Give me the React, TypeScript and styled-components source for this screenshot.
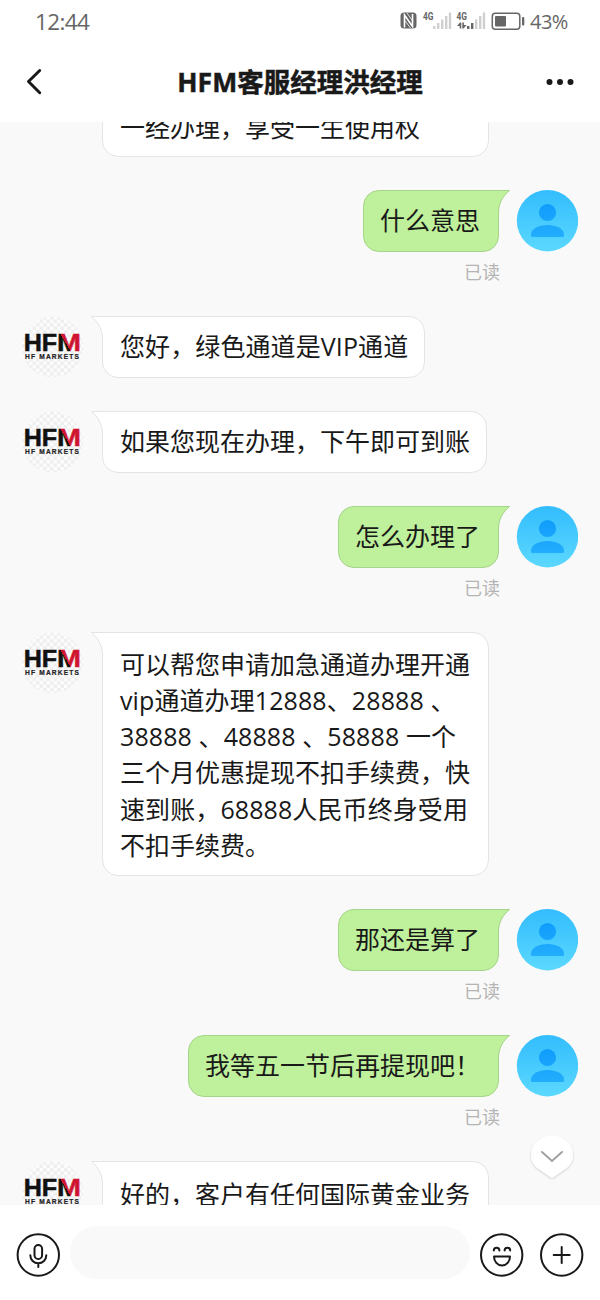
import React from 'react';
import styled, { createGlobalStyle } from 'styled-components';

const GlobalStyle = createGlobalStyle`
  * { box-sizing: border-box; }
  body {
    margin: 0;
    background: #fff;
    font-family: 'Open Sans', 'Noto Sans CJK SC', sans-serif;
    color: #191919;
  }
`;

const Screen = styled.div`
  width: 600px;
  height: 1300px;
  display: flex;
  flex-direction: column;
  overflow: hidden;
  background: #fff;
`;

const StatusBar = styled.div`
  height: 44px;
  flex: none;
  display: flex;
  align-items: center;
  justify-content: space-between;
  padding: 0 31px 0 35px;
  color: #666;
  font-size: 22.5px;
  line-height: 44px;
`;

const Clock = styled.span`
  letter-spacing: -0.6px;
`;

const StatusIcons = styled.div`
  display: flex;
  align-items: center;
`;

const BatteryText = styled.span`
  width: 39px;
  margin-left: 5px;
  font-size: 20px;
  letter-spacing: -0.5px;
  white-space: nowrap;
`;

const NavBar = styled.header`
  height: 78px;
  flex: none;
  display: grid;
  grid-template-columns: 80px 1fr 80px;
  align-items: center;
`;

const Title = styled.h1`
  margin: 0 0 2px;
  text-align: center;
  font-size: 26.5px;
  font-weight: 700;
  line-height: 40px;
  white-space: nowrap;
  -webkit-text-stroke: 0.5px #191919;
`;

const NavButton = styled.button<{ $align: 'start' | 'end' }>`
  border: 0;
  background: none;
  height: 78px;
  padding: 0 25px 2px;
  display: flex;
  align-items: center;
  justify-content: flex-${(p) => p.$align};
`;

const Chat = styled.main`
  height: 1083px;
  flex: none;
  overflow: hidden;
  background: #f9f9f9;
  position: relative;
`;

const MessageList = styled.div`
  display: flex;
  flex-direction: column;
  gap: 33px;
  margin-top: -27px;
  padding: 0 22px;
`;

const Row = styled.div<{ $sent?: boolean }>`
  display: flex;
  align-items: flex-start;
  flex-direction: ${(p) => (p.$sent ? 'row-reverse' : 'row')};
  gap: ${(p) => (p.$sent ? 17 : 18)}px;
`;

const AvatarSlot = styled.div`
  width: 62px;
  height: 62px;
  flex: none;
`;

const Stack = styled.div`
  display: flex;
  flex-direction: column;
  align-items: flex-end;
`;

const Bubble = styled.div<{ $sent?: boolean; $width: number; $height: number; $top: number }>`
  position: relative;
  width: ${(p) => p.$width}px;
  height: ${(p) => p.$height}px;
  padding-top: ${(p) => p.$top}px;
  padding-left: ${(p) => (p.$sent ? 16 : 17)}px;
  border: 1px solid ${(p) => (p.$sent ? '#a5d58a' : '#e4e4e4')};
  border-radius: ${(p) => (p.$sent ? '16px 0 16px 16px' : '0 16px 16px 16px')};
  background: ${(p) => (p.$sent ? '#bff09b' : '#fff')};
  font-size: 25px;
  line-height: 36.15px;
`;

const Line = styled.div<{ $spacing: number }>`
  height: 36.15px;
  white-space: pre;
  letter-spacing: ${(p) => p.$spacing}px;
`;

const Tail = styled.svg<{ $sent?: boolean }>`
  position: absolute;
  top: -1px;
  ${(p) => (p.$sent ? 'right: -12px;' : 'left: -12px;')}
  transform: ${(p) => (p.$sent ? 'scaleX(-1)' : 'none')};
`;

const ReadMark = styled.div`
  height: 31px;
  padding-top: 7px;
  font-size: 18px;
  line-height: 26px;
  color: #b4b4b4;
  margin-right: -1px;
`;

const ScrollDown = styled.button`
  position: absolute;
  left: 526px;
  top: 1009px;
  padding: 0;
  border: 0;
  background: none;
  line-height: 0;
`;

const InputBar = styled.footer`
  flex: 1;
  display: flex;
  align-items: flex-start;
  padding: 21px 16px 0;
`;

const RoundButton = styled.button`
  width: 44px;
  height: 44px;
  margin-top: 7px;
  padding: 0;
  border: 0;
  background: none;
  line-height: 0;
`;

const InputField = styled.div`
  width: 400px;
  height: 53px;
  margin: 0 10px 0 10px;
  border-radius: 27px;
  background: #f9f9f9;
`;

const ButtonPair = styled.div`
  display: flex;
  gap: 16px;
`;

const BrandAvatar = () => (
  <svg width="62" height="62" viewBox="0 0 62 62">
    <defs>
      <pattern id="checks" width="7" height="7" patternUnits="userSpaceOnUse">
        <rect width="7" height="7" fill="#fcfcfc" />
        <rect width="3.500" height="3.500" fill="#efefef" />
        <rect x="3.500" y="3.500" width="3.500" height="3.500" fill="#efefef" />
      </pattern>
      <linearGradient id="brandM" gradientUnits="userSpaceOnUse" x1="38" y1="31" x2="50" y2="24">
        <stop offset="0.5" stopColor="#111" />
        <stop offset="0.5" stopColor="#cf1430" />
      </linearGradient>
    </defs>
    <circle cx="30.500" cy="31" r="30.500" fill="url(#checks)" />
    <g fontFamily="Liberation Sans, sans-serif" fontWeight="700">
      <text x="1.700" y="34.700" fontSize="24.500" textLength="33.500" lengthAdjust="spacingAndGlyphs" fill="#111" stroke="#111" strokeWidth="0.500">HF</text>
      <text x="35" y="34.700" fontSize="24.500" textLength="24" lengthAdjust="spacingAndGlyphs" fill="url(#brandM)" stroke="url(#brandM)" strokeWidth="0.500">M</text>
      <text x="3" y="43.300" fontSize="6.600" textLength="54" fill="#222" stroke="#222" strokeWidth="0.200">HF MARKETS</text>
    </g>
  </svg>
);

const UserAvatar = () => (
  <svg width="62" height="62" viewBox="0 0 62 62">
    <defs>
      <linearGradient id="userBg" x1="0" y1="0" x2="0" y2="1">
        <stop offset="0" stopColor="#33bdfd" />
        <stop offset="1" stopColor="#5bd8fe" />
      </linearGradient>
      <linearGradient id="userFg" gradientUnits="userSpaceOnUse" x1="0" y1="14" x2="0" y2="47">
        <stop offset="0" stopColor="#109cfc" />
        <stop offset="1" stopColor="#22adfd" />
      </linearGradient>
    </defs>
    <circle cx="31.500" cy="30.700" r="30.700" fill="url(#userBg)" />
    <circle cx="31.500" cy="22.500" r="8.600" fill="url(#userFg)" />
    <path d="M15 44.500c0-6 8-9.600 16.500-9.600s16.500 3.600 16.500 9.600v1q0 1.500-1.500 1.500h-30q-1.500 0-1.500-1.500z" fill="url(#userFg)" />
  </svg>
);

const BubbleTail = ({ sent }: { sent?: boolean }) => (
  <Tail $sent={sent} width="20" height="26" viewBox="0 0 20 26">
    <path d="M.5 .5C7 6 11.500 13 11.500 23V26H20V.5z" fill={sent ? '#bff09b' : '#fff'} />
    <path d="M20 .5H.5C7 6 11.500 13 11.500 23V26" fill="none" stroke={sent ? '#a5d58a' : '#e4e4e4'} />
  </Tail>
);

type Message = {
  lines: string[];
  width: number;
  height?: number;
  top?: number;
  sent?: boolean;
  noAvatar?: boolean;
};

const messages: Message[] = [
  { lines: ['一经办理，享受一生使用权'], width: 387, top: 13, noAvatar: true },
  { lines: ['什么意思'], width: 136, sent: true },
  { lines: ['您好，绿色通道是VIP通道'], width: 323 },
  { lines: ['如果您现在办理，下午即可到账'], width: 385 },
  { lines: ['怎么办理了'], width: 161, sent: true },
  {
    lines: [
      '可以帮您申请加急通道办理开通',
      'vip通道办理12888、28888 、',
      '38888 、48888 、58888 一个',
      '三个月优惠提现不扣手续费，快',
      '速到账，68888人民币终身受用',
      '不扣手续费。',
    ],
    width: 387,
    height: 244,
    top: 13,
  },
  { lines: ['那还是算了'], width: 161, sent: true },
  { lines: ['我等五一节后再提现吧！'], width: 311, sent: true },
  { lines: ['好的，客户有任何国际黄金业务'], width: 387, height: 98, top: 14 },
];

// Lines that mix Latin text or digits with Chinese are set slightly wider.
const spacingFor = (line: string) => (/[0-9A-Za-z]/.test(line) ? 0.1 : 0);

const MessageRow = ({ message: m }: { message: Message }) => (
  <Row $sent={m.sent}>
    <AvatarSlot>{!m.noAvatar && (m.sent ? <UserAvatar /> : <BrandAvatar />)}</AvatarSlot>
    <Stack>
      <Bubble $sent={m.sent} $width={m.width} $height={m.height ?? 62} $top={m.top ?? 11}>
        <BubbleTail sent={m.sent} />
        {m.lines.map((line) => (
          <Line key={line} $spacing={spacingFor(line)}>{line}</Line>
        ))}
      </Bubble>
      {m.sent && <ReadMark>已读</ReadMark>}
    </Stack>
  </Row>
);

const StatusGlyphs = () => (
  <svg width="125" height="24" viewBox="400 10 125 24">
    <rect x="400.500" y="12.500" width="16" height="16" rx="3.500" fill="#666" />
    <path d="M404.500 27.500V15l8 11.500V14" fill="none" stroke="#fff" strokeWidth="1.600" />
    <path d="M407 13l6 8.500M404 19.500l6.500 8.500" stroke="#fff" strokeWidth="0.800" />
    <g fontFamily="Roboto, sans-serif" fontSize="10.500" fontWeight="700" fill="#666">
      <text x="423" y="19.500" textLength="10.500" lengthAdjust="spacingAndGlyphs">4G</text>
      <text x="456.500" y="19.500" textLength="10.500" lengthAdjust="spacingAndGlyphs">4G</text>
    </g>
    <g fill="#cfcfcf">
      <rect x="433" y="26" width="2.400" height="3" />
      <rect x="437" y="23" width="2.400" height="6" />
      <rect x="441" y="19.500" width="2.400" height="9.500" />
      <rect x="445" y="16" width="2.400" height="13" />
      <rect x="448.800" y="12.500" width="2.400" height="16.500" />
      <rect x="475" y="19.500" width="2.400" height="9.500" />
      <rect x="479" y="16" width="2.400" height="13" />
      <rect x="482.800" y="12.500" width="2.400" height="16.500" />
    </g>
    <g fill="#666">
      <rect x="467" y="26" width="2.400" height="3" />
      <rect x="471" y="23" width="2.400" height="6" />
      <path d="M457 26l3-3.500h1.300v6h-1.600V26zM462.300 22.500h1.600V25h2.700l-3 3.500h-1.300z" />
    </g>
    <rect x="492.300" y="13.300" width="27.500" height="16" rx="3" fill="none" stroke="#666" strokeWidth="1.500" />
    <rect x="495" y="16" width="11" height="10.500" rx="1" fill="#666" />
    <rect x="522" y="17" width="2.300" height="8.500" rx="1" fill="#666" />
  </svg>
);

export default function App() {
  return (
    <Screen>
      <GlobalStyle />
      <StatusBar>
        <Clock>12:44</Clock>
        <StatusIcons>
          <StatusGlyphs />
          <BatteryText>43%</BatteryText>
        </StatusIcons>
      </StatusBar>
      <NavBar>
        <NavButton $align="start" aria-label="返回">
          <svg width="18" height="28" viewBox="0 0 18 28" fill="none" stroke="#191919" strokeWidth="3" strokeLinecap="round" strokeLinejoin="round">
            <path d="M14.700 2.500L3.500 13.500L14.700 24.700" />
          </svg>
        </NavButton>
        <Title>HFM客服经理洪经理</Title>
        <NavButton $align="end" aria-label="更多">
          <svg width="30" height="8" viewBox="0 0 30 8" fill="#191919">
            <circle cx="4.500" cy="4" r="3" />
            <circle cx="15" cy="4" r="3" />
            <circle cx="25.500" cy="4" r="3" />
          </svg>
        </NavButton>
      </NavBar>
      <Chat>
        <MessageList>
          {messages.map((m, i) => (
            <MessageRow key={i} message={m} />
          ))}
        </MessageList>
        <ScrollDown aria-label="到底部">
          <svg width="52" height="54" viewBox="0 0 52 54">
            <defs>
              <filter id="pinShadow" x="-20%" y="-20%" width="140%" height="140%">
                <feDropShadow dx="0" dy="1" stdDeviation="1.200" floodColor="#000" floodOpacity="0.2" />
              </filter>
            </defs>
            <path
              d="M26 4.500a21 19.500 0 0 1 21 19.500c0 6.500-3.500 11.500-8.500 14.500L27.500 46q-1.500 1-3 0L13.500 38.500C8.500 35.500 5 30.500 5 24a21 19.500 0 0 1 21-19.500z"
              fill="#fff"
              filter="url(#pinShadow)"
            />
            <path d="M16 21l10 9 10-9" fill="none" stroke="#a0a0a0" strokeWidth="2" strokeLinecap="round" />
          </svg>
        </ScrollDown>
      </Chat>
      <InputBar>
        <RoundButton aria-label="语音">
          <svg width="44" height="44" viewBox="0 0 44 44" fill="none" stroke="#191919" strokeWidth="2" strokeLinecap="round">
            <circle cx="22.300" cy="22" r="20.700" />
            <rect x="18.500" y="12" width="7.600" height="14" rx="3.800" />
            <path d="M14.300 22.300a8 8 0 0 0 16 0M22.300 30.300V34" />
          </svg>
        </RoundButton>
        <InputField />
        <ButtonPair>
          <RoundButton aria-label="表情">
            <svg width="44" height="44" viewBox="0 0 44 44" fill="none" stroke="#191919" strokeWidth="2" strokeLinecap="round" strokeLinejoin="round">
              <circle cx="21.700" cy="22" r="20.700" />
              <path d="M13.800 17.500a2.800 2.800 0 0 1 5.600 0M24.600 17.500a2.800 2.800 0 0 1 5.600 0M14 23.500h16c0 5-3.500 9-8 9s-8-4-8-9z" />
            </svg>
          </RoundButton>
          <RoundButton aria-label="添加">
            <svg width="44" height="44" viewBox="0 0 44 44" fill="none" stroke="#191919" strokeWidth="2" strokeLinecap="round">
              <circle cx="21.700" cy="22" r="20.700" />
              <path d="M21.700 14v16M13.700 22h16" />
            </svg>
          </RoundButton>
        </ButtonPair>
      </InputBar>
    </Screen>
  );
}
